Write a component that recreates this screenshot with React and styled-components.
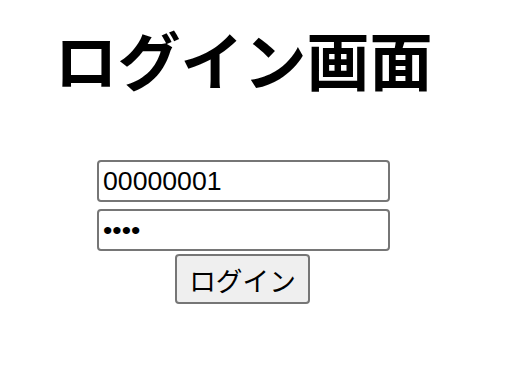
import React from "react";
import styled, { createGlobalStyle } from "styled-components";

const Global = createGlobalStyle`
  html, body { margin: 0; padding: 0; background: #ffffff; }
  body { font-family: "Liberation Sans", Arial, sans-serif; color: #000; }
`;

const Page = styled.main`
  width: 487px;
  display: flex;
  flex-direction: column;
  align-items: center;
  padding-top: 26px;
`;

const Title = styled.h1`
  margin: 0;
  font-family: "Noto Sans CJK JP", "Noto Sans", sans-serif;
  font-weight: 700;
  font-size: 63px;
  line-height: 64px;
  color: #000;
`;

const Form = styled.form`
  margin-top: 70px;
  width: 293px;
  display: flex;
  flex-direction: column;
  align-items: center;
`;

const Field = styled.input`
  box-sizing: border-box;
  width: 293px;
  height: 42px;
  margin: ${(p) => p.$mt || 0}px 0 0 0;
  padding: 2px 4px;
  border: 2px solid #767676;
  border-radius: 4px;
  background: #fff;
  font-family: "Liberation Sans", Arial, sans-serif;
  font-size: 26.67px;
  color: #000;
  outline: none;
`;

const Submit = styled.button`
  box-sizing: border-box;
  margin: 3px 2px 0 0;
  width: 135px;
  height: 50px;
  padding: 0;
  border: 2px solid #767676;
  border-radius: 4px;
  background: #efefef;
  font-family: "Noto Sans CJK JP", "Noto Sans", sans-serif;
  font-size: 26.67px;
  color: #000;
  display: flex;
  align-items: center;
  justify-content: center;
`;

export default function App() {
  return (
    <>
      <Global />
      <Page>
        <Title>ログイン画面</Title>
        <Form onSubmit={(e) => e.preventDefault()}>
          <Field type="text" defaultValue="00000001" />
          <Field type="password" defaultValue="test" $mt={7} />
          <Submit type="submit">ログイン</Submit>
        </Form>
      </Page>
    </>
  );
}
